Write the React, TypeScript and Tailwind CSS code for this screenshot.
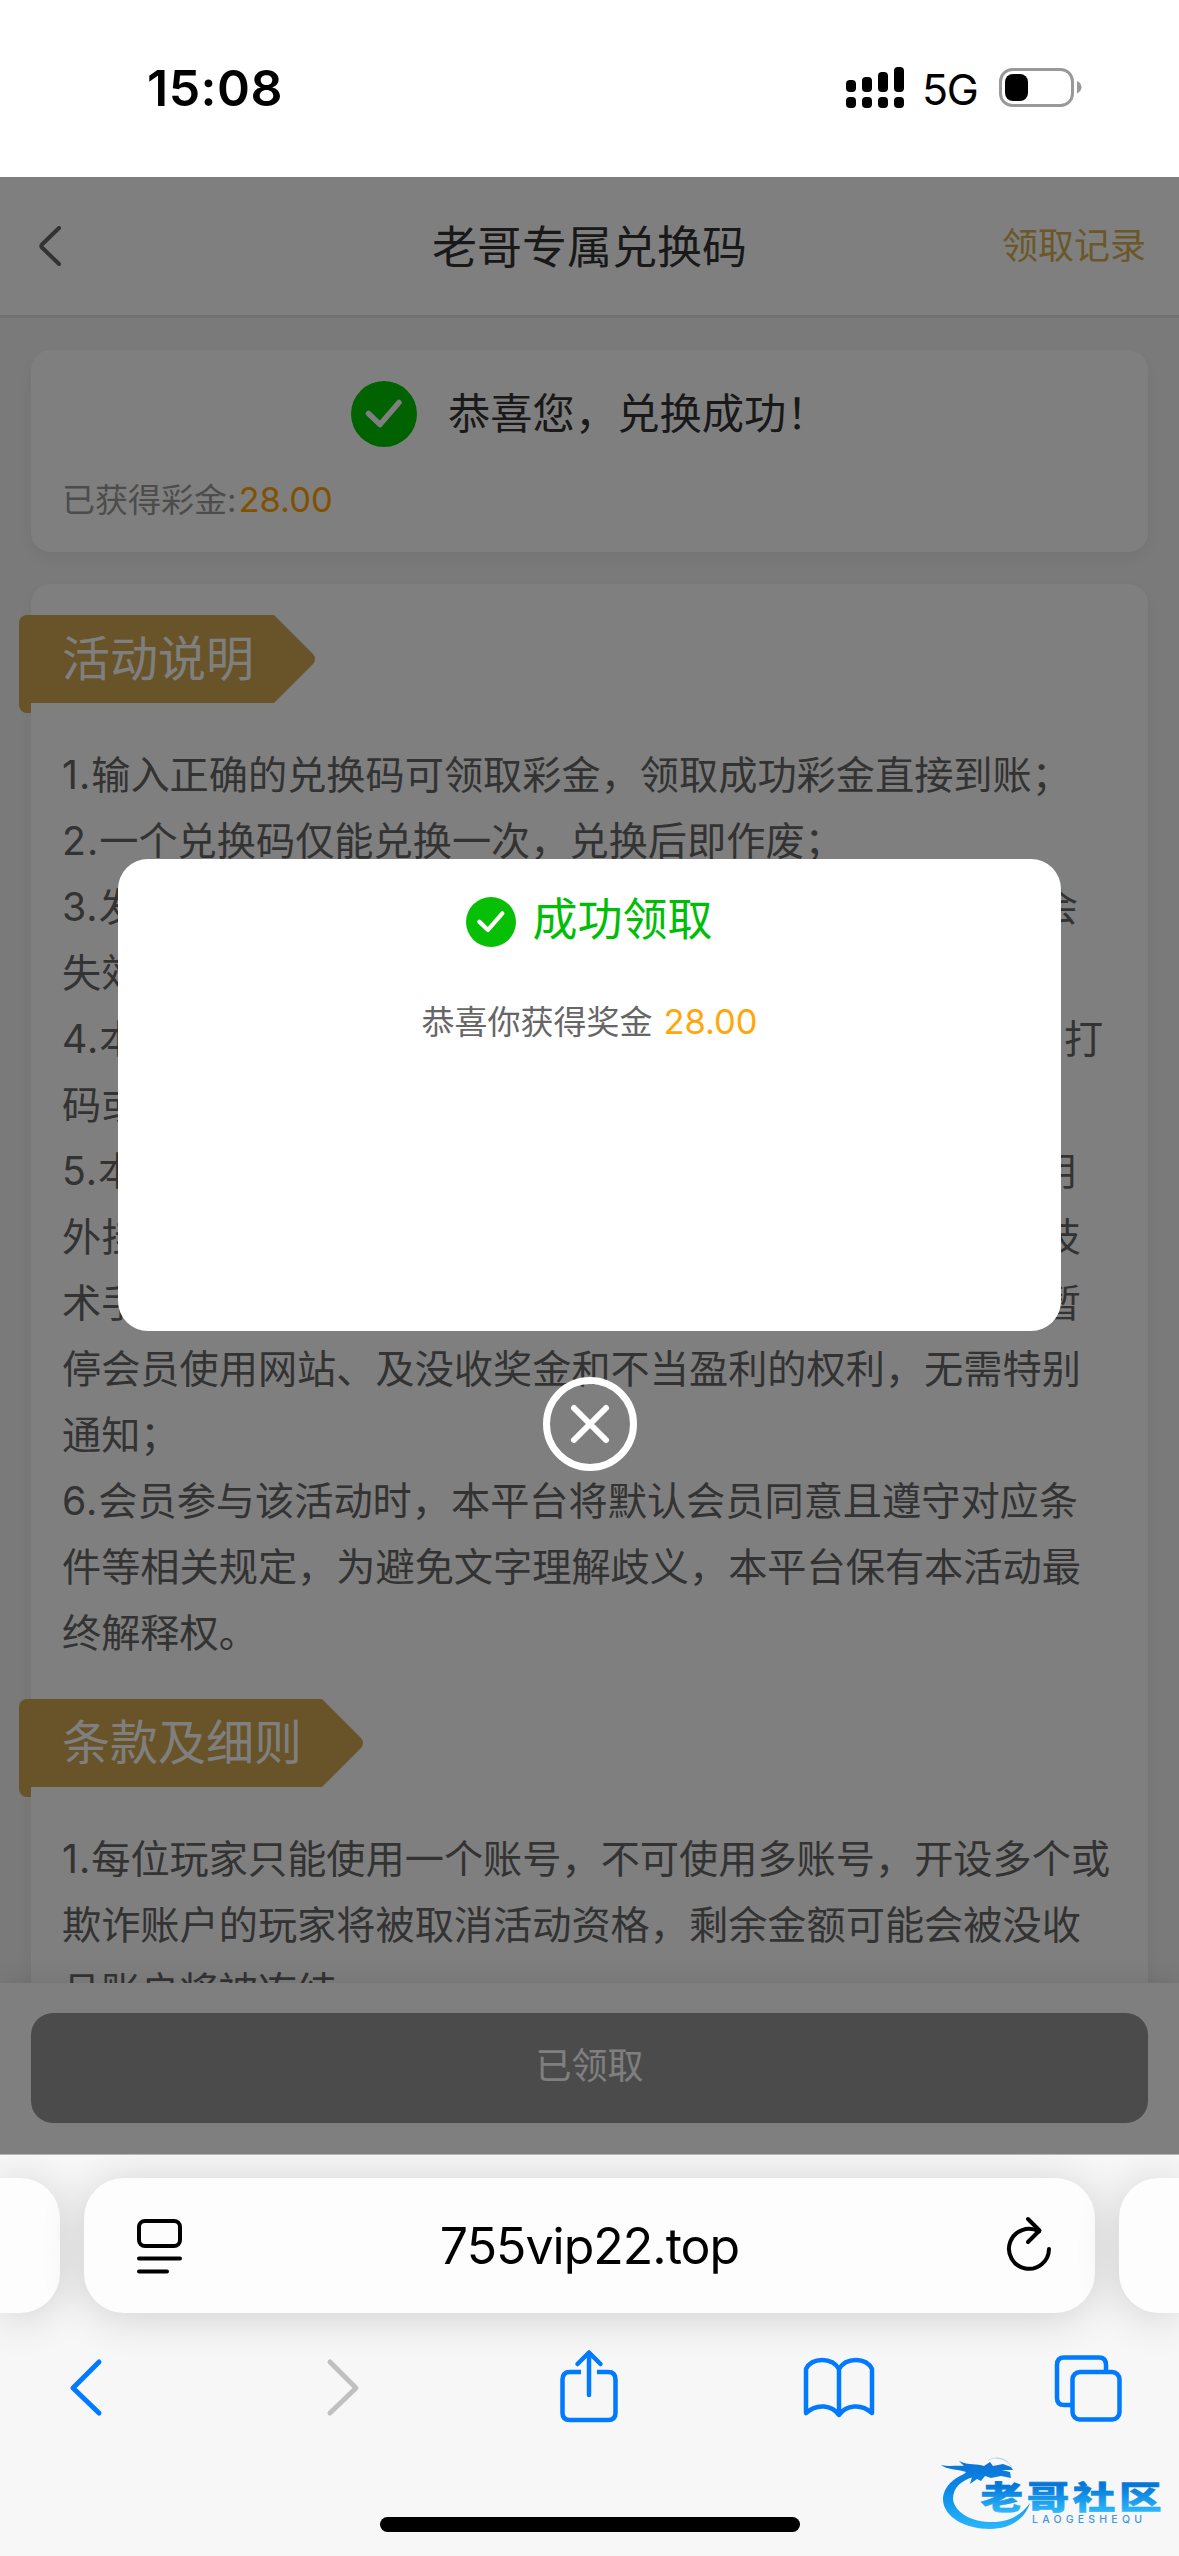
import type { ReactNode } from 'react'

const RULES = [
  '1.输入正确的兑换码可领取彩金，领取成功彩金直接到账；',
  '2.一个兑换码仅能兑换一次，兑换后即作废；',
  '3.发放的兑换码请在有效时间内进行兑换，过期兑换码将会',
  '失效；',
  '4.本活动所领取的彩金，仅需要完成对应的3倍流水即可，打',
  '码或投注不限平台；',
  '5.本活动仅限正常娱乐的会员参与，如发现有任何人员使用',
  '外挂程序、恶意套取、多账号领取，或者利用系统漏洞等技',
  '术手段获取奖金，本平台有权在不事先通知的情况下，可暂',
  '停会员使用网站、及没收奖金和不当盈利的权利，无需特别',
  '通知；',
  '6.会员参与该活动时，本平台将默认会员同意且遵守对应条',
  '件等相关规定，为避免文字理解歧义，本平台保有本活动最',
  '终解释权。',
]

const TERMS = [
  '1.每位玩家只能使用一个账号，不可使用多账号，开设多个或',
  '欺诈账户的玩家将被取消活动资格，剩余金额可能会被没收',
  '且账户将被冻结。',
]

function StatusBar() {
  const bars = [13, 10, 5, 0]
  return (
    <div className="flex h-[177px] shrink-0 items-start justify-between bg-white pr-[97px] pl-[147px] text-black">
      <div className="mt-[58px] text-[50px] leading-[60px] font-semibold tracking-[0.5px]">15:08</div>
      <div className="mt-[67px] flex items-start">
        <svg width="59" height="41" viewBox="0 0 59 41">
          {bars.map((top, i) => (
            <g key={i}>
              <rect x={i * 16} y={top} width="10" height={25 - top} rx="4" />
              <rect x={i * 16} y="30" width="10" height="11" rx="4" />
            </g>
          ))}
        </svg>
        <span className="mt-[-3px] ml-[17px] w-[77px] text-[43px] leading-[50px] tracking-[-1.5px]">5G</span>
        <svg width="83" height="41" viewBox="0 0 83 41">
          <rect x="1.5" y="2.5" width="72" height="36" rx="12" fill="none" stroke="#999" strokeWidth="3" />
          <rect x="6" y="7" width="23" height="27" rx="8" />
          <path d="M78 14c6 2.500 6 10 0 12.500z" fill="#999" />
        </svg>
      </div>
    </div>
  )
}

function CheckBadge({ size, color }: { size: number; color: string }) {
  return (
    <svg width={size} height={size} viewBox="0 0 66 66" fill="none">
      <circle cx="33" cy="33" r="33" fill={color} />
      <path d="M17.500 32.500L29 43.500L48 21.500" stroke="#fff" strokeWidth="5.500" strokeLinecap="round" strokeLinejoin="round" />
    </svg>
  )
}

function Ribbon({ children }: { children: ReactNode }) {
  return (
    <div className="relative -ml-3 flex h-[88px]">
      <div className="absolute top-10 left-0 h-[58px] w-3 rounded-bl-lg bg-[#d0a850]" />
      <div className="relative flex items-center rounded-tl-lg bg-[#d0a850] pr-[20px] pl-[43px] text-[48px] leading-none text-white">
        {children}
      </div>
      <svg width="41" height="88" viewBox="0 0 41 88">
        <path d="M-1 0H0L39 39Q43 44 39 49L0 88H-1z" fill="#d0a850" />
      </svg>
    </div>
  )
}

function Lines({ items }: { items: string[] }) {
  return (
    <div className="mt-[39px] pl-[31px] text-[39.200px] leading-[66px] whitespace-nowrap text-[#666]">
      {items.map((line) => {
        const num = line.match(/^\d\./)?.[0] ?? ''
        return (
          <p key={line} className="h-[66px]">
            <span className="tracking-[1px]">{num}</span>
            {line.slice(num.length)}
          </p>
        )
      })}
    </div>
  )
}

function Page() {
  return (
    <div className="flex h-full flex-col bg-[#f5f5f5]">
      <header className="grid h-[141px] shrink-0 grid-cols-3 items-center border-b-[3px] border-[#e4e4e4] bg-white">
        <svg className="ml-[38px]" width="24" height="40" viewBox="0 0 24 40" fill="none">
          <path d="M21 2L4 18.500Q2.500 20 4 21.500L21 38" stroke="#666" strokeWidth="4" strokeLinecap="round" />
        </svg>
        <h1 className="pt-[2px] text-center text-[45px] leading-none whitespace-nowrap text-[#333]">老哥专属兑换码</h1>
        <div className="pr-[33px] text-right text-[36px] leading-none text-[#d6ae50]">领取记录</div>
      </header>

      <main className="flex-1 overflow-hidden px-[31px] pt-8">
        <section className="h-[202px] rounded-[20px] bg-white pt-[31px] shadow-[0_6px_18px_rgba(0,0,0,0.06)]">
          <div className="flex items-center pl-80">
            <CheckBadge size={66} color="#00c400" />
            <span className="ml-[31px] text-[42.300px] leading-none text-[#333]">恭喜您，兑换成功！</span>
          </div>
          <p className="mt-[28px] flex items-center pl-[31px] text-[33px] leading-[50px] text-[#999]">
            已获得彩金:<span className="ml-[2px] text-[34.500px] text-[#ffa200]">28.00</span>
          </p>
        </section>

        <section className="mt-8 h-[1600px] rounded-[20px] bg-white pt-[31px] shadow-[0_6px_18px_rgba(0,0,0,0.06)]">
          <Ribbon>活动说明</Ribbon>
          <Lines items={RULES} />
          <div className="mt-[33px]">
            <Ribbon>条款及细则</Ribbon>
          </div>
          <Lines items={TERMS} />
        </section>
      </main>

      <footer className="relative h-[171px] shrink-0 bg-white px-[31px] pt-[30px] shadow-[0_0_30px_rgba(0,0,0,0.12)]">
        <button className="h-[110px] w-full rounded-[22px] bg-[#979797] pb-[4px] text-[36px] text-white">已领取</button>
      </footer>
    </div>
  )
}

function RewardDialog() {
  return (
    <div className="absolute inset-0 flex flex-col items-center bg-black/50 pt-[682px]">
      <div className="flex h-[472px] w-[943px] flex-col items-center rounded-[30px] bg-white pt-[31px]">
        <div className="flex h-[58px] items-center text-[45px] leading-none text-[#00be05]">
          <span className="mt-[5px] mr-[16px]"><CheckBadge size={50} color="#07c005" /></span>
          成功领取
        </div>
        <p className="mt-[49px] flex items-center text-[33px] leading-[50px] text-[#666]">
          恭喜你获得奖金<span className="ml-[11px] text-[34.500px] text-[#ffa70a]">28.00</span>
        </p>
      </div>
      <svg className="mt-[46px]" width="94" height="94" viewBox="0 0 94 94" fill="none" stroke="#fff" strokeLinecap="round">
        <circle cx="47" cy="47" r="43.500" strokeWidth="7" />
        <path d="M31 31L63 63M63 31L31 63" strokeWidth="6" />
      </svg>
    </div>
  )
}

function SiteLogo() {
  return (
    <svg width="249" height="106" viewBox="0 0 249 106">
      <defs>
        <linearGradient id="logo" gradientUnits="userSpaceOnUse" x1="0" y1="14" x2="0" y2="80">
          <stop offset="0" stopColor="#0b74d8" />
          <stop offset="0.4" stopColor="#0a8ae8" />
          <stop offset="1" stopColor="#2bb8fb" />
        </linearGradient>
        <linearGradient id="logoText" x1="0" y1="0" x2="0" y2="1">
          <stop offset="0.2" stopColor="#0577d8" />
          <stop offset="0.85" stopColor="#2bb5fa" />
        </linearGradient>
      </defs>
      <path
        d="M42 21C22 27 13 38 13 50C14 67 35 79 60 79C80 79 95 69 100 53C90 67 76 73 59 72C37 71 24 60 23 49C23 38 31 30 44 27z"
        fill="url(#logo)"
      />
      <path
        d="M11 15C19 17 27 15 34 16L29 11C39 16 47 13 54 16L60 12L63 16L73 14L81 17L83 20L72 20L80 22L81 28L71 26L61 28L55 26L51 31L47 29L40 34L42 27L32 27L36 22C27 19 17 20 11 15z"
        fill="url(#logo)"
      />
      <path d="M58 10Q68 5 78 12M66 8Q76 8 82 17" fill="none" stroke="#2e8fdc" strokeWidth="0.6" opacity="0.4" />
      <text
        transform="translate(50.500 59) scale(1.330 1)"
        fontSize="32"
        fontWeight="900"
        letterSpacing="2.700"
        fill="url(#logoText)"
        stroke="url(#logoText)"
        strokeWidth="0.600"
      >
        老哥社区
      </text>
      <text x="102" y="72.500" fontSize="10.500" fontWeight="500" textLength="110" fill="#3f97dc">LAOGESHEQU</text>
    </svg>
  )
}

function BrowserBar() {
  const pill = 'h-[135px] bg-[#fdfdfd] shadow-[0_4px_44px_rgba(0,0,0,0.16)]'
  return (
    <div className="relative flex-1 overflow-hidden border-t border-[#b4b4b4] bg-[#f7f7f7]">
      <div className="mt-[23px] flex gap-6">
        <div className={`${pill} w-[60px] rounded-r-[40px]`} />
        <div className={`${pill} flex w-[1011px] items-center justify-between rounded-[40px] pr-[42px] pl-[52px]`}>
          <svg width="48" height="56" viewBox="0 0 48 56" fill="none" stroke="#000" strokeWidth="4" strokeLinecap="round">
            <rect x="3" y="3" width="41" height="25" rx="6" />
            <path d="M3 40.500H44M3 53.500H31" />
          </svg>
          <span className="mr-[10px] text-[50px] leading-none tracking-[-1px] text-black">755vip22.top</span>
          <svg className="-mt-1" width="48" height="56" viewBox="0 0 48 56" fill="none" stroke="#000" strokeWidth="4" strokeLinecap="round" strokeLinejoin="round">
            <path d="M44 33A20 20 0 1 1 34 15.500" />
            <path d="M23 3L34.500 14.500L23 26" />
          </svg>
        </div>
        <div className={`${pill} w-[60px] rounded-l-[40px]`} />
      </div>

      <div className="mt-[35px] flex items-center pl-[68px] text-[#007aff]">
        <svg width="36" height="76" viewBox="0 0 36 76" fill="none" stroke="currentColor" strokeWidth="5" strokeLinecap="round" strokeLinejoin="round">
          <path d="M31 14L5 40L31 65" />
        </svg>
        <svg className="ml-[221px]" width="36" height="76" viewBox="0 0 36 76" fill="none" stroke="#c0c0c0" strokeWidth="5" strokeLinecap="round" strokeLinejoin="round">
          <path d="M5 14L31 40L5 65" />
        </svg>
        <svg className="ml-[198px]" width="60" height="76" viewBox="0 0 60 76" fill="none" stroke="currentColor" strokeWidth="4.500" strokeLinecap="round" strokeLinejoin="round">
          <path d="M30 5V47M18.500 16L30 4.500L41.500 16" />
          <path d="M22 24H11Q3.500 24 3.500 31.500V65Q3.500 72 11 72H49Q56.500 72 56.500 65V31.500Q56.500 24 49 24H38" strokeLinecap="butt" />
        </svg>
        <svg className="ml-[183px]" width="74" height="76" viewBox="0 0 74 76" fill="none" stroke="currentColor" strokeWidth="4.500" strokeLinecap="round" strokeLinejoin="round">
          <path d="M37 21V67C30 57 15 55 4 65V21C10 9 30 9 37 21C44 9 64 9 70 21V65C59 55 44 57 37 67" />
        </svg>
        <svg className="ml-[176px]" width="72" height="76" viewBox="0 0 72 76" fill="none" stroke="currentColor" strokeWidth="4.500">
          <path d="M20 57H12Q5 57 5 50V17Q5 9.500 12 9.500H47Q54 9.500 54 17V24" />
          <rect x="20.500" y="24" width="47" height="47.500" rx="7.500" />
        </svg>
      </div>

      <div className="absolute bottom-6 left-1/2 h-[15px] w-[420px] -translate-x-1/2 rounded-full bg-black" />
      <div className="absolute right-0 bottom-0">
        <SiteLogo />
      </div>
    </div>
  )
}

export default function App() {
  return (
    <div className="flex h-[2556px] w-[1179px] flex-col overflow-hidden bg-white font-['Inter','Noto_Sans_CJK_SC',sans-serif]">
      <StatusBar />
      <div className="relative h-[1977px] shrink-0 overflow-hidden">
        <Page />
        <RewardDialog />
      </div>
      <BrowserBar />
    </div>
  )
}
